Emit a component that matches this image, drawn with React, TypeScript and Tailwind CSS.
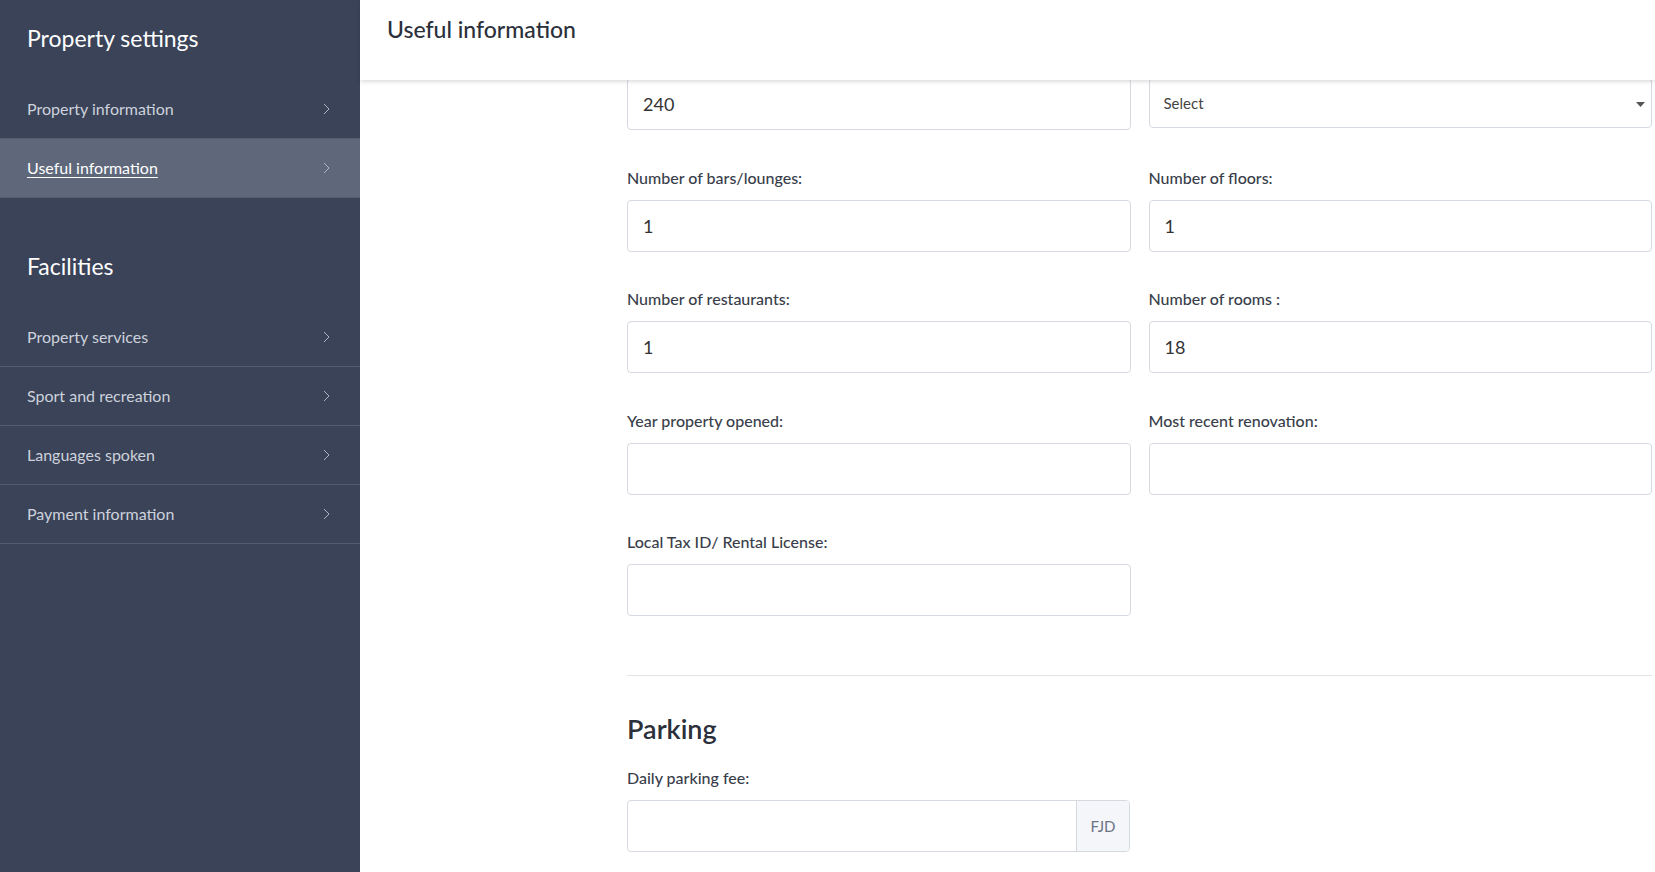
import type { ReactNode } from "react";

const SETTINGS_LINKS = ["Property information", "Useful information"];
const FACILITY_LINKS = [
  "Property services",
  "Sport and recreation",
  "Languages spoken",
  "Payment information",
];

function Chevron() {
  return (
    <svg width="7" height="12" viewBox="0 0 7 12" fill="none" className="shrink-0">
      <path d="M1 1l5 5-5 5" stroke="#aeb5c4" strokeWidth="1" />
    </svg>
  );
}

function NavItem({ label, active }: { label: string; active?: boolean }) {
  return (
    <a
      href="#"
      className={`flex h-[59px] items-center justify-between border-b border-[#535c70] pl-[27px] pr-[30px] text-[16px] ${
        active
          ? "bg-[#5e687a] text-white underline underline-offset-[3px] decoration-1"
          : "text-[#cdd2dc]"
      }`}
    >
      <span>{label}</span>
      <Chevron />
    </a>
  );
}

function Field({ label, value, children }: { label?: string; value?: string; children?: ReactNode }) {
  return (
    <div className="flex flex-col">
      {label && (
        <label className="mb-[13px] text-[16px] font-medium leading-[18px] text-[#393e4a]">{label}</label>
      )}
      {children ?? (
        <input
          defaultValue={value}
          className="h-[52px] w-full rounded border border-[#d5d9e0] bg-white px-[15px] text-[18px] text-[#333] outline-none"
        />
      )}
    </div>
  );
}

export default function App() {
  return (
    <div className="flex h-screen overflow-hidden bg-white font-['Lato',sans-serif]">
      <aside className="flex w-[360px] shrink-0 flex-col bg-[#3a4358]">
        <h2 className="px-[27px] pb-[26px] pt-[22px] text-[23px] leading-8 text-white">Property settings</h2>
        <nav className="flex flex-col">
          {SETTINGS_LINKS.map((l) => (
            <NavItem key={l} label={l} active={l === "Useful information"} />
          ))}
        </nav>
        <h2 className="px-[27px] pb-[26px] pt-[52px] text-[23px] leading-8 text-white">Facilities</h2>
        <nav className="flex flex-col">
          {FACILITY_LINKS.map((l) => (
            <NavItem key={l} label={l} />
          ))}
        </nav>
      </aside>

      <main className="flex min-w-0 flex-1 flex-col">
        <header className="relative z-10 h-[80px] shrink-0 bg-white pl-[27px] pt-[13px] shadow-[0_2px_4px_rgba(0,0,0,0.13)]">
          <h1 className="text-[23px] font-medium leading-8 text-[#2b303b]">Useful information</h1>
        </header>

        {/* form is scrolled a little: the first row sits under the header */}
        <div className="flex-1 overflow-hidden">
          <div className="-mt-[2px] ml-[267px] w-[1025px]">
            <div className="grid grid-cols-2 items-start gap-x-[18px] gap-y-[38.5px]">
              <Field value="240" />
              <div className="relative">
                <select className="h-[50px] w-full appearance-none rounded border border-[#d5d9e0] bg-white px-[14px] text-[15px] text-[#444] outline-none">
                  <option>Select</option>
                </select>
                <svg
                  width="9"
                  height="5"
                  viewBox="0 0 9 5"
                  className="pointer-events-none absolute right-[7px] top-[24px]"
                >
                  <path d="M0 0h9L4.5 5z" fill="#555" />
                </svg>
              </div>
              <Field label="Number of bars/lounges:" value="1" />
              <Field label="Number of floors:" value="1" />
              <Field label="Number of restaurants:" value="1" />
              <Field label="Number of rooms :" value="18" />
              <Field label="Year property opened:" value="" />
              <Field label="Most recent renovation:" value="" />
              <Field label="Local Tax ID/ Rental License:" value="" />
            </div>

            <div className="mt-[59px] h-px bg-[#dfe2e7]" />

            <h2 className="mt-[37px] text-[27px] font-semibold leading-8 text-[#2b303b]">Parking</h2>

            <div className="mt-[24px] w-[503px]">
              <Field label="Daily parking fee:">
                <div className="flex h-[52px] overflow-hidden rounded border border-[#d5d9e0]">
                  <input className="min-w-0 flex-1 px-[15px] text-[18px] text-[#333] outline-none" />
                  <span className="flex w-[53px] items-center justify-center border-l border-[#d5d9e0] bg-[#f4f6f9] text-[15px] text-[#6b7384]">
                    FJD
                  </span>
                </div>
              </Field>
            </div>
          </div>
        </div>
      </main>
    </div>
  );
}
